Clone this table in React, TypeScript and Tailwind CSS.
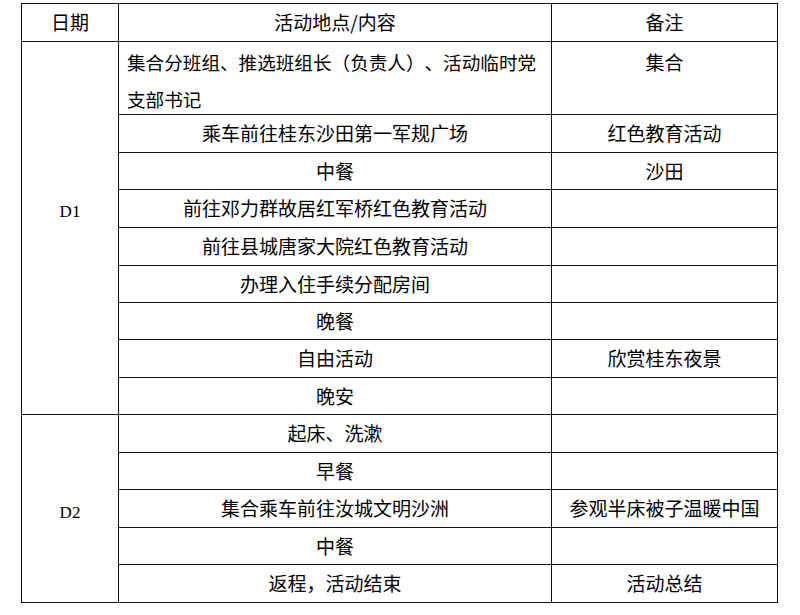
import React from 'react';

type Row = { content: string; note?: string };

const D1_ROWS: Row[] = [
  { content: '', note: '集合' },
  { content: '乘车前往桂东沙田第一军规广场', note: '红色教育活动' },
  { content: '中餐', note: '沙田' },
  { content: '前往邓力群故居红军桥红色教育活动' },
  { content: '前往县城唐家大院红色教育活动' },
  { content: '办理入住手续分配房间' },
  { content: '晚餐' },
  { content: '自由活动', note: '欣赏桂东夜景' },
  { content: '晚安' },
];

const D2_ROWS: Row[] = [
  { content: '起床、洗漱' },
  { content: '早餐' },
  { content: '集合乘车前往汝城文明沙洲', note: '参观半床被子温暖中国' },
  { content: '中餐' },
  { content: '返程，活动结束', note: '活动总结' },
];

const cell = 'bg-white flex items-center justify-center text-center';

export default function App() {
  return (
    <div className="min-h-[615px] w-[800px] bg-white pt-[3px] pl-[21px] text-[19px] text-black font-['Noto_Sans_CJK_SC',sans-serif] [text-spacing-trim:space-all]">
      <div className="grid w-[757px] grid-cols-[96px_432px_225px] grid-rows-[37px_72px_37px_36px_37px_37px_36px_36px_37px_36px_37px_36px_37px_36px_37px] gap-px bg-[#111] p-px">
        {/* header */}
        <div className={cell}>日期</div>
        <div className={cell}>活动地点/内容</div>
        <div className={cell}>备注</div>

        {/* D1 */}
        <div className={`${cell} row-span-9 pb-[32px] font-['Liberation_Serif',serif] text-[17px]`}>D1</div>
        {D1_ROWS.map((r, i) => (
          <React.Fragment key={`d1-${i}`}>
            {i === 0 ? (
              <div className="whitespace-nowrap bg-white pl-2 pt-[1px] text-left text-[18.6px] leading-[37px]">
                集合分班组、推选班组长（负责人）、活动临时党
                <br />
                支部书记
              </div>
            ) : (
              <div className={cell}>{r.content}</div>
            )}
            <div className={i === 0 ? 'bg-white pt-[1px] text-center leading-[37px]' : cell}>{r.note}</div>
          </React.Fragment>
        ))}

        {/* D2 */}
        <div className={`${cell} row-span-5 pt-2 font-['Liberation_Serif',serif] text-[17px]`}>D2</div>
        {D2_ROWS.map((r, i) => (
          <React.Fragment key={`d2-${i}`}>
            <div className={cell}>{r.content}</div>
            <div className={cell}>{r.note}</div>
          </React.Fragment>
        ))}
      </div>
    </div>
  );
}
